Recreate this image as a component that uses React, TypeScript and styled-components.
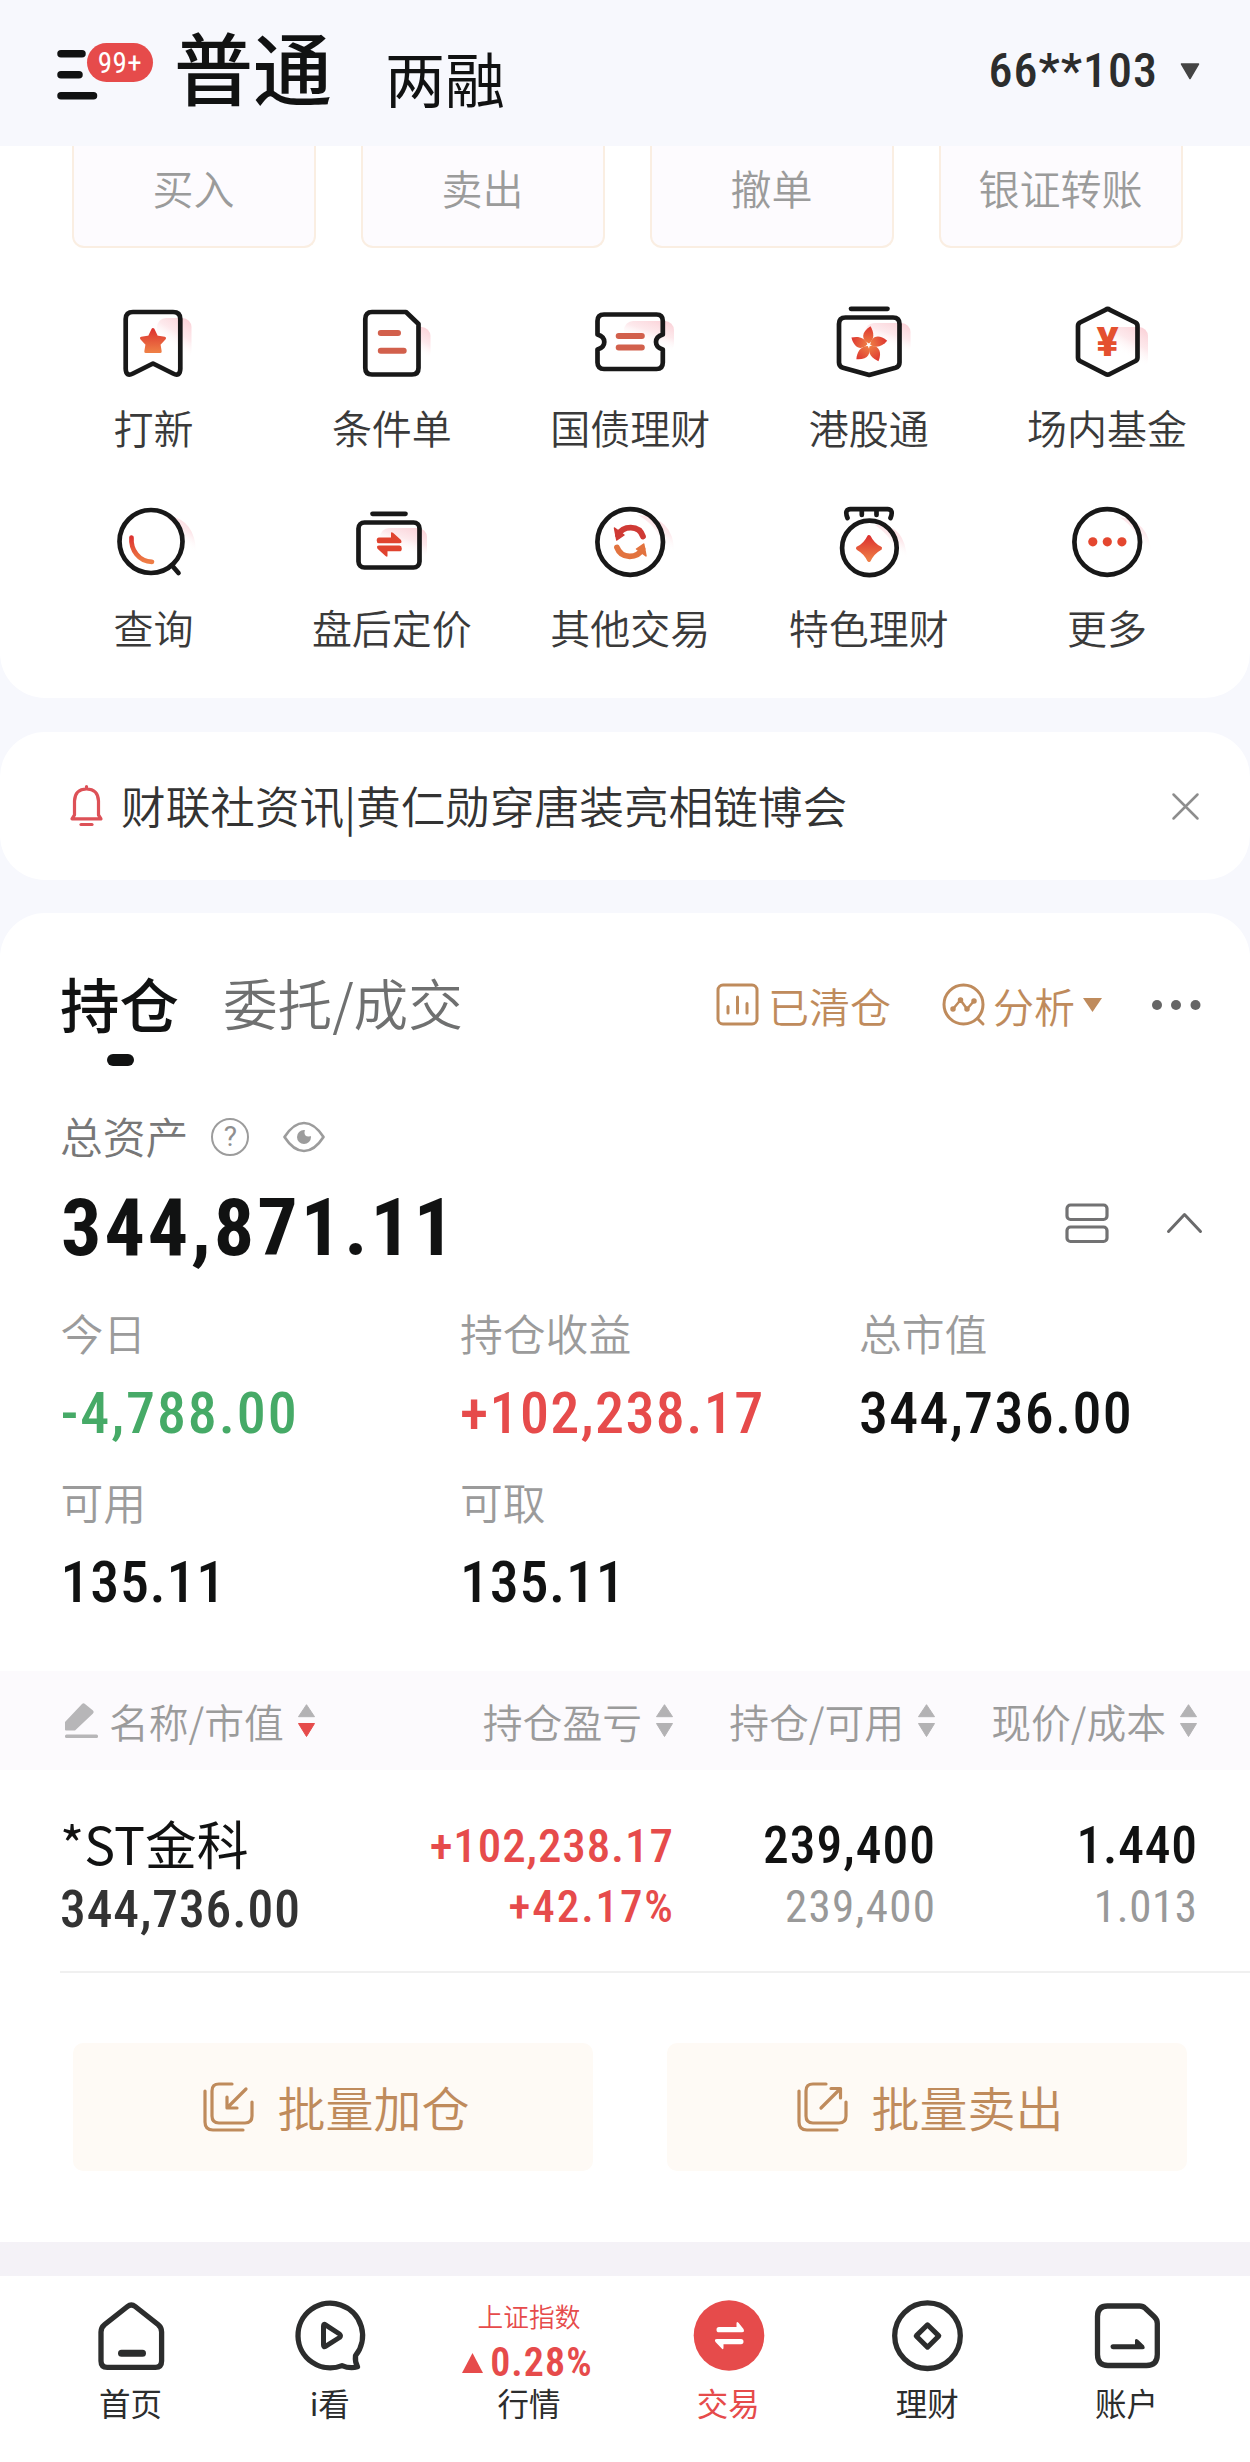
import React from 'react';
import styled, { createGlobalStyle } from 'styled-components';

const CJK = '"Noto Sans CJK SC", sans-serif';
const NUM = 'Roboto, "Noto Sans CJK SC", sans-serif';

const ink = '#111212';
const charcoal = '#2c2d2d';
const grey = '#9b9b9b';
const midGrey = '#6f7070';
const red = '#e64b4b';
const green = '#46aa67';
const bronze = '#bf8b5c';

const GlobalStyle = createGlobalStyle`
  * { box-sizing: border-box; }
  body { margin: 0; background: #f7f8fd; font-family: ${CJK}; color: ${ink}; }
  svg { display: block; flex: none; overflow: visible; }
`;

const Page = styled.div`
  width: 1250px;
  height: 2462px;
  overflow: hidden;
  display: flex;
  flex-direction: column;
  background: #f7f8fd;
`;

const Digits = styled.span<{ $size: number; $track?: number; $weight?: number; $line?: number; $color?: string }>`
  font-family: ${NUM};
  font-stretch: 85%;
  font-size: ${(p) => p.$size}px;
  font-weight: ${(p) => p.$weight ?? 500};
  letter-spacing: ${(p) => p.$track ?? 1}px;
  margin-right: -${(p) => p.$track ?? 1}px;
  line-height: ${(p) => p.$line ?? 60}px;
  color: ${(p) => p.$color ?? ink};
  white-space: nowrap;
`;

/* ---------- header ---------- */

const Header = styled.header`
  height: 146px;
  flex: none;
  display: flex;
  align-items: flex-start;
  padding-left: 57px;
`;

const MenuButton = styled.div`
  position: relative;
  width: 96px;
  height: 60px;
  margin-top: 43px;
`;

const Badge = styled.span`
  position: absolute;
  left: 30px;
  top: 0;
  width: 66px;
  height: 39px;
  border-radius: 20px;
  background: ${red};
  color: #fff;
  font: 450 29px/41px ${NUM};
  font-stretch: 85%;
  letter-spacing: 0.5px;
  text-align: center;
`;

const AccountKind = styled.span<{ $active?: boolean }>`
  font-size: ${(p) => (p.$active ? 79 : 60)}px;
  font-weight: ${(p) => (p.$active ? 500 : 400)};
  line-height: 80px;
  margin-top: ${(p) => (p.$active ? 26 : 37)}px;
  margin-left: ${(p) => (p.$active ? 21 : 53)}px;
  white-space: nowrap;
`;

const Account = styled.div`
  margin: 41px 50px 0 auto;
  display: flex;
  align-items: center;
  gap: 23px;
`;

/* ---------- quick trading ---------- */

const TradeCard = styled.section`
  height: 552px;
  flex: none;
  background: #fff;
  border-radius: 0 0 45px 45px;
`;

const ActionRow = styled.div`
  display: grid;
  grid-template-columns: repeat(4, 244px);
  column-gap: 45px;
  padding-left: 71.5px;
`;

const Action = styled.div`
  height: 102px;
  border: 2px solid #faeee2;
  border-top: 0;
  border-radius: 0 0 12px 12px;
  background: #fdfbfe;
  color: ${grey};
  font-size: 41px;
  font-weight: 350;
  line-height: 82px;
  text-align: center;
`;

const ShortcutGrid = styled.div`
  display: grid;
  grid-template-columns: repeat(5, 238.4px);
  row-gap: 51px;
  padding: 55px 0 0 34.3px;
`;

const Shortcut = styled.div`
  display: flex;
  flex-direction: column;
  align-items: center;
  gap: 19px;
  font-size: 40px;
  font-weight: 350;
  line-height: 50px;
  color: #3a3a3a;
  white-space: nowrap;
`;

/* ---------- news ---------- */

const NewsCard = styled.section`
  height: 148px;
  flex: none;
  margin-top: 34px;
  padding: 0 51px 0 70px;
  display: flex;
  align-items: center;
  background: #fff;
  border-radius: 45px;
`;

const NewsText = styled.p`
  margin: 0 auto 3px 18px;
  font-size: 44.65px;
  font-weight: 350;
  line-height: 60px;
  color: #333;
  white-space: nowrap;
`;

/* ---------- holdings ---------- */

const HoldingsCard = styled.section`
  height: 1329px;
  flex: none;
  margin-top: 33px;
  background: #fff;
  border-radius: 45px 45px 0 0;
`;

const TabBar = styled.div`
  display: flex;
  align-items: center;
  height: 129px;
  padding: 49px 49px 0 60px;
`;

const Tab = styled.span<{ $active?: boolean }>`
  position: relative;
  font-size: ${(p) => (p.$active ? 59.5 : 54.6)}px;
  font-weight: ${(p) => (p.$active ? 500 : 350)};
  color: ${(p) => (p.$active ? ink : midGrey)};
  line-height: 80px;
  margin-right: ${(p) => (p.$active ? 44 : 0)}px;
  white-space: nowrap;
`;

const TabMark = styled.i`
  position: absolute;
  left: 47px;
  top: 92px;
  width: 27px;
  height: 12px;
  border-radius: 6px;
  background: ${ink};
`;

const Tool = styled.span<{ $gap: number; $after: number }>`
  display: flex;
  align-items: center;
  gap: ${(p) => p.$gap}px;
  margin-right: ${(p) => p.$after}px;
`;

const Tools = styled.div`
  margin-left: auto;
  padding-top: 5px;
  display: flex;
  align-items: center;
`;

const ToolLabel = styled.span`
  font-size: 41px;
  font-weight: 350;
  line-height: 50px;
  color: ${bronze};
  white-space: nowrap;
  padding-top: 1px;
`;

const TotalRow = styled.div`
  display: flex;
  align-items: center;
  height: 50px;
  margin-top: 68px;
  padding-left: 60px;
`;

const TotalLabel = styled.span`
  font-size: 42.8px;
  font-weight: 350;
  line-height: 50px;
  color: #777;
  margin-right: 23px;
`;

const HelpMark = styled.span`
  width: 38px;
  height: 38px;
  margin: 4px 34px 0 0;
  border: 2.5px solid #9c9c9c;
  border-radius: 50%;
  font: 400 28px/34px ${NUM};
  color: #8f8f8f;
  text-align: center;
`;

const EyeBox = styled.span`
  margin-top: 4px;
`;

const AmountRow = styled.div`
  display: flex;
  align-items: center;
  height: 90px;
  margin-top: 23px;
  padding: 0 48px 0 61px;
`;

const AmountTools = styled.div`
  margin: -11px 0 0 auto;
  display: flex;
  align-items: center;
  gap: 58px;
`;

const Stats = styled.div`
  display: grid;
  grid-template-columns: 399.5px 399px auto;
  row-gap: 28px;
  padding: 34px 0 0 60.5px;
`;

const Stat = styled.div`
  display: flex;
  flex-direction: column;
  gap: 21px;
`;

const StatLabel = styled.span`
  font-size: 42.8px;
  font-weight: 350;
  line-height: 50px;
  color: ${grey};
`;

const rowColumns = `
  display: grid;
  grid-template-columns: 341px 272px 262px 262px;
  padding-left: 60px;
`;

const TableHead = styled.div`
  ${rowColumns}
  height: 99px;
  margin-top: 54px;
  background: #fcfafd;
`;

const HeadCell = styled.div<{ $left?: boolean }>`
  display: flex;
  align-items: center;
  justify-content: ${(p) => (p.$left ? 'flex-start' : 'flex-end')};
  gap: 14px;
`;

const HeadText = styled.span`
  font-size: 39.8px;
  font-weight: 350;
  line-height: 50px;
  color: ${grey};
  white-space: nowrap;
`;

const PencilBox = styled.span`
  margin-right: -3px;
`;

const HoldingRow = styled.div`
  ${rowColumns}
  height: 201px;
  padding-top: 43px;
`;

const Divider = styled.hr`
  margin: 0 0 0 60px;
  border: 0;
  height: 2px;
  background: #f0f0f0;
`;

const HoldingCell = styled.div<{ $left?: boolean }>`
  display: flex;
  flex-direction: column;
  align-items: ${(p) => (p.$left ? 'flex-start' : 'flex-end')};
  gap: ${(p) => (p.$left ? 12 : 6)}px;
  padding-top: ${(p) => (p.$left ? 0 : 3)}px;
`;

const StockName = styled.span`
  font-size: 51.8px;
  font-weight: 370;
  line-height: 60px;
`;

const BatchRow = styled.div`
  display: grid;
  grid-template-columns: 520px 520px;
  column-gap: 74px;
  padding: 70px 0 0 73px;
`;

const BatchButton = styled.div`
  height: 128px;
  display: flex;
  align-items: center;
  justify-content: center;
  gap: 23px;
  border-radius: 10px;
  background: #fefaf5;
  color: ${bronze};
  font-size: 48px;
  font-weight: 350;
  line-height: 60px;
  padding: 0 0 0 7px;
`;

const BatchLabel = styled.span`
  margin-top: -2px;
`;

/* ---------- bottom navigation ---------- */

const NavBar = styled.nav`
  flex: none;
  height: 220px;
  border-top: 34px solid #f4f2f7;
  background: #fff;
  display: grid;
  grid-template-columns: repeat(6, 199.2px);
  padding: 20px 0 0 31px;
`;

const NavItem = styled.div<{ $active?: boolean }>`
  display: flex;
  flex-direction: column;
  align-items: center;
  justify-content: flex-start;
  color: ${(p) => (p.$active ? red : charcoal)};
`;

const NavLabel = styled.span`
  margin-top: 6px;
  font-size: 31.5px;
  font-weight: 400;
  line-height: 40px;
`;

const IndexBox = styled.div`
  height: 80px;
  display: flex;
  flex-direction: column;
  align-items: center;
  padding-top: 5px;
  gap: 13px;
`;

const IndexName = styled.span`
  font-size: 25.7px;
  font-weight: 350;
  line-height: 30px;
  color: ${red};
`;

const IndexChange = styled.span`
  display: flex;
  align-items: center;
  gap: 7px;
  height: 38px;
  margin-right: 4px;
`;

/* ---------- drawings ---------- */

const GradientStore = styled.svg`
  position: absolute;
`;

const SharedGradients = () => (
  <GradientStore width="0" height="0">
    <defs>
      <linearGradient id="ember" x1="0" y1="0" x2="0" y2="1">
        <stop offset="0" stopColor="#dd3430" />
        <stop offset="1" stopColor="#ee7d45" />
      </linearGradient>
      <linearGradient id="blush" x1="0.9" y1="0" x2="0.4" y2="1">
        <stop offset="0" stopColor="#f9bcc5" stopOpacity="0.7" />
        <stop offset="0.4" stopColor="#fbd3d9" stopOpacity="0.5" />
        <stop offset="0.75" stopColor="#fff" stopOpacity="0" />
      </linearGradient>
    </defs>
  </GradientStore>
);

const Frame = ({ children }: { children: React.ReactNode }) => (
  <svg width="80" height="80" viewBox="0 0 80 80" fill="none" stroke="#181818" strokeWidth="4.7" strokeLinecap="round" strokeLinejoin="round">
    {children}
  </svg>
);

const Blush = ({ x, y, w, h }: { x: number; y: number; w: number; h: number }) => (
  <rect x={x} y={y} width={w} height={h} rx={9} fill="url(#blush)" stroke="none" />
);

const BookmarkIcon = () => (
  <Frame>
    <Blush x={44} y={15} w={34.5} h={42} />
    <path d="M20 9H60Q67.3 9 67.3 16V66Q67 74 60 70.5L40 60.5L20 70.5Q13 74 12.7 66V16Q12.7 9 20 9Z" />
    <path d="M40 26.500L43.600 34L51.500 35.200L46 41.200L47.200 48.500H32.800L34 41.200L28.500 35.200L36.400 34Z" fill="url(#ember)" stroke="url(#ember)" strokeWidth="3" />
  </Frame>
);

const OrderIcon = () => (
  <Frame>
    <Blush x={50} y={24} w={28.5} h={34} />
    <path d="M20 9H54L66.500 21V65Q66.500 71.500 60 71.500H20Q13.300 71.500 13.300 65V16Q13.300 9 20 9Z" fill="#fff" />
    <path d="M28.800 30H46M28.800 47.700H51.700" stroke="#d2604c" strokeWidth="6" />
  </Frame>
);

const TicketIcon = () => (
  <Frame>
    <Blush x={34} y={18} w={50} h={32} />
    <path d="M14 11.500H66.500Q72.800 11.500 72.800 18V31.500Q66 33.500 66 39Q66 44.500 72.800 46.500V59.500Q72.800 66 66.500 66H14Q7.500 66 7.500 59.500V46.500Q14.300 44.500 14.300 39Q14.300 33.500 7.500 31.500V18Q7.500 11.500 14 11.500Z" />
    <path d="M28.700 32.900H51.800M28.700 44.500H51.800" stroke="#d2604c" strokeWidth="6" />
  </Frame>
);

const HongKongIcon = () => (
  <Frame>
    <Blush x={36} y={20} w={45.5} h={32} />
    <path d="M22 5.800H58.500" />
    <path d="M16.500 14.500H64Q70.500 14.500 70.500 21V59.500Q70.500 63.500 66.500 64.800L40.200 72L14 64.800Q10 63.500 10 59.500V21Q10 14.500 16.500 14.500Z" />
    <g fill="url(#ember)" stroke="none">
      {[0, 72, 144, 216, 288].map((a) => (
        <path key={a} transform={`rotate(${a} 39.800 42)`} d="M40 40.500C32 37 32 29 41.500 23.200C45 29 46 36 40 40.500Z" />
      ))}
    </g>
  </Frame>
);

const YuanSign = styled.text`
  font: 900 41px ${NUM};
  text-anchor: middle;
  stroke: none;
  fill: #e4502f;
`;

const FundIcon = () => (
  <Frame>
    <Blush x={44} y={24} w={37} h={42} />
    <path d="M38.500 6.800Q40.700 5.200 42.900 6.800L68.500 19.500Q70.500 20.700 70.500 23V54.500Q70.500 56.800 68.500 58L42.900 71Q40.700 72.300 38.500 71L13 58Q11 56.800 11 54.500V23Q11 20.700 13 19.500Z" />
    <YuanSign x="40.700" y="53.300">¥</YuanSign>
  </Frame>
);

const SearchIcon = () => (
  <Frame>
    <path d="M56 13Q82 17 83 49Q78 52 70 48Q70 26 52 13Z" fill="url(#blush)" stroke="none" />
    <circle cx="38" cy="38.500" r="31.500" />
    <path d="M59 62.500L65.500 70" />
    <path d="M18.500 34.500C17.500 47 26 58.500 39 58.800" stroke="url(#ember)" />
  </Frame>
);

const FixedPriceIcon = () => (
  <Frame>
    <Blush x={28} y={25} w={47} h={32} />
    <path d="M20.500 10.800H53.500" />
    <rect x="6.500" y="19.500" width="61" height="45" rx="6" />
    <g fill="#e0432f" stroke="none">
      <path d="M27 34.500H39V30Q39 28.500 41 29.700L49 37Q50.500 40.300 47.500 40.300H27Q24.700 40 24.700 37.400Q24.700 34.500 27 34.500Z" />
      <path d="M47.500 48.300H35.500V52.800Q35.500 54.500 33.500 53L25.500 45.800Q24 42.500 27 42.500H47.500Q49.800 42.800 49.800 45.400Q49.800 48.300 47.500 48.300Z" />
    </g>
  </Frame>
);

const ExchangeIcon = () => (
  <Frame>
    <path d="M48 12Q84 14 84 49Q78 52 72 48Q72 26 48 12Z" fill="url(#blush)" stroke="none" />
    <circle cx="40.200" cy="39" r="32.800" />
    <path d="M28 32C33 22.500 49 21.500 53 33.500" stroke="#cf3a35" strokeWidth="5.800" />
    <path d="M24.500 25L34 32L26.800 37Z" fill="#cf3a35" stroke="#cf3a35" strokeWidth="1.500" />
    <path d="M52.500 46C47.500 55.500 31.500 56.500 27 44.500" stroke="#e2733f" strokeWidth="5.800" />
    <path d="M56 53L46.500 46L53.700 41Z" fill="#e2733f" stroke="#e2733f" strokeWidth="1.500" />
  </Frame>
);

const MedalIcon = () => (
  <Frame>
    <path d="M46 22Q76 20 78 56Q72 56 66 52Q66 36 46 22Z" fill="url(#blush)" stroke="none" />
    <path d="M18.500 15Q15 6.500 21.500 6.200H58.500Q65 6.500 61.500 15M32.800 7V12M47.500 7V12" />
    <circle cx="40.400" cy="44.900" r="27.300" />
    <path d="M40 34Q43.500 41.500 51 45.300Q43.500 49.500 40 57Q36.500 49.500 29 45.300Q36.500 41.500 40 34Z" fill="url(#ember)" stroke="url(#ember)" strokeWidth="4" />
  </Frame>
);

const MoreIcon = () => (
  <Frame>
    <path d="M52 14Q82 18 84 49Q80 50 73 48Q72 26 52 14Z" fill="url(#blush)" stroke="none" />
    <circle cx="40.200" cy="39" r="32.800" />
    <g fill="#e4472f" stroke="none">
      <circle cx="25.800" cy="38.800" r="4.600" />
      <circle cx="40.300" cy="38.800" r="4.600" />
      <circle cx="54.900" cy="38.800" r="4.600" />
    </g>
  </Frame>
);

const NavFrame = ({ children }: { children: React.ReactNode }) => (
  <svg width="80" height="80" viewBox="0 0 80 80" fill="none" stroke={charcoal} strokeWidth="5.300" strokeLinecap="round" strokeLinejoin="round">
    {children}
  </svg>
);

const HomeIcon = () => (
  <NavFrame>
    <path d="M36.500 10.500Q40.300 7.500 44.200 10.500L67 28.500Q70.600 31.500 70.600 36V65Q70.600 71.300 64.500 71.300H16.200Q10 71.300 10 65V36Q10 31.500 13.700 28.500Z" />
    <path d="M30.500 57.200H51.500" strokeWidth="7" />
  </NavFrame>
);

const WatchIcon = () => (
  <NavFrame>
    <path d="M65.500 59.700A32.300 32.300 0 1 0 52 69.600Q60 73 67.500 70.800Q64.800 66 65.500 59.700Z" />
    <path d="M33.500 30V49Q33.500 51.500 35.500 50.300L49.500 41.500Q51.500 39.800 49.500 38L35.500 28.800Q33.500 27.500 33.500 30Z" strokeWidth="5" />
  </NavFrame>
);

const TradeIcon = () => (
  <NavFrame>
    <circle cx="41" cy="39.500" r="35.300" fill={red} stroke="none" />
    <g fill="#fff" stroke="none">
      <path d="M31 31H48.500V27.500Q48.500 24.800 50.500 26.800L55.500 33Q57 36.300 54 36.300H31Q28.500 36.300 28.500 33.700Q28.500 31 31 31Z" />
      <path d="M53 48.300H35.500V51.500Q35.500 54.300 33.500 52.300L27.500 46Q25.800 43 29 43H53Q55.500 43 55.500 45.600Q55.500 48.300 53 48.300Z" />
    </g>
  </NavFrame>
);

const WealthIcon = () => (
  <NavFrame>
    <circle cx="40.500" cy="39.700" r="32.800" />
    <path d="M40.500 28.800L51.800 39.900L40.500 51.200L29.200 39.900Z" strokeWidth="5" />
  </NavFrame>
);

const ProfileIcon = () => (
  <NavFrame>
    <path d="M20.500 10H52.500Q56 10 58.500 12.500L67 20.500Q70.300 23.500 70.300 27.500V58.500Q70.300 69.500 59.500 69.500H21Q10.500 69.500 10.500 58.500V20.500Q10.500 10 20.500 10Z" />
    <path d="M26 48.200H48V44.500Q48.500 42 51 43.800L57 49.500Q59 53.300 55.500 53.300H26Q23.500 53 23.500 50.800Q23.500 48.200 26 48.200Z" fill={charcoal} stroke="none" />
  </NavFrame>
);

const SortArrows = ({ down }: { down?: boolean }) => (
  <svg width="17" height="33" viewBox="0 0 17 33" strokeWidth="1" strokeLinejoin="round">
    <path d="M8.500 0.700L16.500 12.700H0.500Z" fill="#b3b2b4" stroke="#b3b2b4" />
    <path d="M8.500 32.500L16.500 19.500H0.500Z" fill={down ? red : '#b3b2b4'} stroke={down ? red : '#b3b2b4'} />
  </svg>
);

const BatchIcon = ({ out }: { out?: boolean }) => (
  <svg width="51" height="50" viewBox="0 0 51 50" fill="none" stroke={bronze} strokeWidth="3.200" strokeLinecap="round" strokeLinejoin="round">
    <path d="M2 9V40Q2 48 10 48H40" />
    <path d="M29 2H16Q9 2 9 9V34Q9 41 16 41H42Q49 41 49 34V20" />
    {out ? <path d="M24 26L43 7M34 6.500H43.500V16" /> : <path d="M43 7L24.500 25.500M24 15V26H34" />}
  </svg>
);

/* ---------- data ---------- */

const actions = ['买入', '卖出', '撤单', '银证转账'];

const shortcuts = [
  { label: '打新', Icon: BookmarkIcon },
  { label: '条件单', Icon: OrderIcon },
  { label: '国债理财', Icon: TicketIcon },
  { label: '港股通', Icon: HongKongIcon },
  { label: '场内基金', Icon: FundIcon },
  { label: '查询', Icon: SearchIcon },
  { label: '盘后定价', Icon: FixedPriceIcon },
  { label: '其他交易', Icon: ExchangeIcon },
  { label: '特色理财', Icon: MedalIcon },
  { label: '更多', Icon: MoreIcon },
];

const stats = [
  { label: '今日', value: '-4,788.00', color: green, track: 1.9 },
  { label: '持仓收益', value: '+102,238.17', color: red, track: 1.4 },
  { label: '总市值', value: '344,736.00', color: ink, track: 1.3 },
  { label: '可用', value: '135.11', color: ink, track: 0.7 },
  { label: '可取', value: '135.11', color: ink, track: 0.7 },
];

const App = () => (
  <Page>
    <GlobalStyle />
    <SharedGradients />

    <Header>
      <MenuButton>
        <svg width="41" height="60" viewBox="0 0 41 60" stroke={ink} strokeWidth="7.500" strokeLinecap="round">
          <path d="M4 10.700H25M4 31.700H22M4 52.700H36.500" />
        </svg>
        <Badge>99+</Badge>
      </MenuButton>
      <AccountKind $active>普通</AccountKind>
      <AccountKind>两融</AccountKind>
      <Account>
        <Digits $size={48} $track={1} $color={charcoal}>66**103</Digits>
        <svg width="20" height="17" viewBox="0 0 20 17">
          <path d="M1.500 1H18.500L10 15.500Z" fill="#444" stroke="#444" strokeWidth="1.500" strokeLinejoin="round" />
        </svg>
      </Account>
    </Header>

    <TradeCard>
      <ActionRow>
        {actions.map((a) => (
          <Action key={a}>{a}</Action>
        ))}
      </ActionRow>
      <ShortcutGrid>
        {shortcuts.map(({ label, Icon }) => (
          <Shortcut key={label}>
            <Icon />
            <span>{label}</span>
          </Shortcut>
        ))}
      </ShortcutGrid>
    </TradeCard>

    <NewsCard>
      <svg width="33" height="42" viewBox="0 0 33 42" fill="none" stroke="#dd5157" strokeWidth="3.200" strokeLinejoin="round" strokeLinecap="round">
        <path d="M16.500 1.500V4M4.500 30V16Q5 4 16.500 4Q28 4 28.500 16V30L31 33.800H2L4.500 30" />
        <path d="M11 39.500H22" />
      </svg>
      <NewsText>财联社资讯|黄仁勋穿唐装亮相链博会</NewsText>
      <svg width="27" height="27" viewBox="0 0 27 27" stroke="#8d8d8d" strokeWidth="2.500" strokeLinecap="round">
        <path d="M1.500 1.500L25.500 25.500M25.500 1.500L1.500 25.500" />
      </svg>
    </NewsCard>

    <HoldingsCard>
      <TabBar>
        <Tab $active>
          持仓
          <TabMark />
        </Tab>
        <Tab>委托/成交</Tab>
        <Tools>
          <Tool $gap={9} $after={51}>
            <svg width="43" height="43" viewBox="0 0 43 43" fill="none" stroke={bronze} strokeWidth="3" strokeLinecap="round">
              <rect x="2" y="2" width="39" height="39" rx="5" />
              <path d="M12 23.500V30M21.500 14V30M31 20.500V30" />
            </svg>
            <ToolLabel>已清仓</ToolLabel>
          </Tool>
          <Tool $gap={8} $after={49}>
            <svg width="43" height="43" viewBox="0 0 43 43" fill="none" stroke={bronze} strokeWidth="3" strokeLinecap="round" strokeLinejoin="round">
              <circle cx="21.500" cy="21.500" r="19.500" />
              <path d="M35.500 35.500L41 41" />
              <path d="M11 26L18.500 17L25 26L32 18" strokeWidth="2.500" />
              <g fill={bronze} strokeWidth="1.500">
                <circle cx="11" cy="26" r="2" />
                <circle cx="18.500" cy="17" r="2" />
                <circle cx="25" cy="26" r="2" />
                <circle cx="32" cy="18" r="2" />
              </g>
            </svg>
            <ToolLabel>分析</ToolLabel>
            <svg width="19" height="14" viewBox="0 0 19 14">
              <path d="M0 0H19L9.500 14Z" fill={bronze} />
            </svg>
          </Tool>
          <svg width="50" height="10" viewBox="0 0 50 10" fill="#666">
            <circle cx="6" cy="5" r="5" />
            <circle cx="25" cy="5" r="5" />
            <circle cx="44.500" cy="5" r="5" />
          </svg>
        </Tools>
      </TabBar>

      <TotalRow>
        <TotalLabel>总资产</TotalLabel>
        <HelpMark>?</HelpMark>
        <EyeBox>
          <svg width="42" height="32" viewBox="0 0 42 32" fill="none" stroke="#9c9c9c" strokeWidth="2.700" strokeLinejoin="round">
            <path d="M1.500 16Q10.500 2 21 2Q31.500 2 40.500 16Q31.500 30 21 30Q10.500 30 1.500 16Z" />
            <circle cx="21" cy="16" r="7" fill="#9c9c9c" stroke="none" />
            <circle cx="25.500" cy="11.500" r="4" fill="#fff" stroke="none" />
          </svg>
        </EyeBox>
      </TotalRow>

      <AmountRow>
        <Digits $size={80} $weight={700} $track={3} $line={90}>344,871.11</Digits>
        <AmountTools>
          <svg width="44" height="40" viewBox="0 0 44 40" fill="none" stroke="#727273" strokeWidth="3.200">
            <rect x="2" y="2" width="40" height="14.500" rx="3.500" />
            <rect x="2" y="24" width="40" height="14.500" rx="3.500" />
          </svg>
          <svg width="35" height="20" viewBox="0 0 35 20" fill="none" stroke="#6a6a6b" strokeWidth="3" strokeLinecap="round" strokeLinejoin="round">
            <path d="M1.500 18.500L17.500 1.500L33.500 18.500" />
          </svg>
        </AmountTools>
      </AmountRow>

      <Stats>
        {stats.map((s) => (
          <Stat key={s.label}>
            <StatLabel>{s.label}</StatLabel>
            <Digits $size={58} $line={70} $color={s.color} $track={s.track}>{s.value}</Digits>
          </Stat>
        ))}
      </Stats>

      <TableHead>
        <HeadCell $left>
          <PencilBox>
            <svg width="38" height="37" viewBox="0 0 38 37" fill="#b7b6b8">
              <path d="M5 20L22 2Q23.500 0.500 25 2L33 8.500Q34.500 10 33 11.500L15 28.500H6Q5 28.500 5 27.500Z" />
              <rect x="5" y="32.500" width="33" height="3.500" rx="1.500" />
            </svg>
          </PencilBox>
          <HeadText>名称/市值</HeadText>
          <SortArrows down />
        </HeadCell>
        {['持仓盈亏', '持仓/可用', '现价/成本'].map((title) => (
          <HeadCell key={title}>
            <HeadText>{title}</HeadText>
            <SortArrows />
          </HeadCell>
        ))}
      </TableHead>

      <HoldingRow>
        <HoldingCell $left>
          <StockName>*ST金科</StockName>
          <Digits $size={51.5} $line={50} $track={0.9} $color="#333">344,736.00</Digits>
        </HoldingCell>
        <HoldingCell>
          <Digits $size={47} $color={red} $track={0.9}>+102,238.17</Digits>
          <Digits $size={45} $line={50} $color={red} $track={1.9}>+42.17%</Digits>
        </HoldingCell>
        <HoldingCell>
          <Digits $size={51.5} $track={1}>239,400</Digits>
          <Digits $size={45} $line={50} $weight={400} $color="#999" $track={1.3}>239,400</Digits>
        </HoldingCell>
        <HoldingCell>
          <Digits $size={51.5} $track={0.8}>1.440</Digits>
          <Digits $size={45} $line={50} $weight={400} $color="#999" $track={0.6}>1.013</Digits>
        </HoldingCell>
      </HoldingRow>
      <Divider />

      <BatchRow>
        <BatchButton>
          <BatchIcon />
          <BatchLabel>批量加仓</BatchLabel>
        </BatchButton>
        <BatchButton>
          <BatchIcon out />
          <BatchLabel>批量卖出</BatchLabel>
        </BatchButton>
      </BatchRow>
    </HoldingsCard>

    <NavBar>
      <NavItem>
        <HomeIcon />
        <NavLabel>首页</NavLabel>
      </NavItem>
      <NavItem>
        <WatchIcon />
        <NavLabel>i看</NavLabel>
      </NavItem>
      <NavItem>
        <IndexBox>
          <IndexName>上证指数</IndexName>
          <IndexChange>
            <svg width="21" height="20" viewBox="0 0 21 20">
              <path d="M10.500 0L21 20H0Z" fill={red} />
            </svg>
            <Digits $size={40} $weight={600} $track={1.1} $line={38} $color={red}>0.28%</Digits>
          </IndexChange>
        </IndexBox>
        <NavLabel>行情</NavLabel>
      </NavItem>
      <NavItem $active>
        <TradeIcon />
        <NavLabel>交易</NavLabel>
      </NavItem>
      <NavItem>
        <WealthIcon />
        <NavLabel>理财</NavLabel>
      </NavItem>
      <NavItem>
        <ProfileIcon />
        <NavLabel>账户</NavLabel>
      </NavItem>
    </NavBar>
  </Page>
);

export default App;
